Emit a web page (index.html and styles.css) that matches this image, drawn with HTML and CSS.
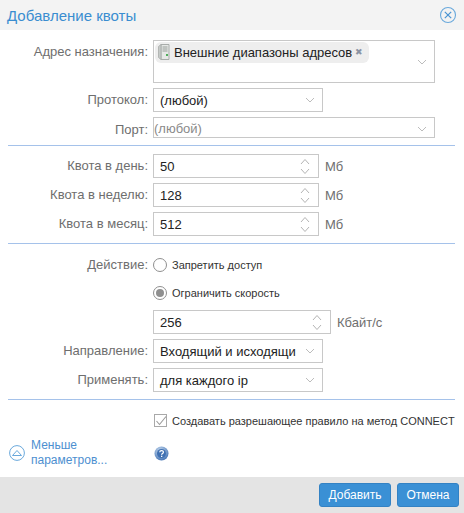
FILE: index.html
```html
<!DOCTYPE html>
<html lang="ru">
<head>
<meta charset="utf-8">
<title>Добавление квоты</title>
<link rel="stylesheet" href="styles.css">
</head>
<body>
<div class="dialog">
  <header class="head">
    <span class="title">Добавление квоты</span>
    <svg class="close" width="18" height="18" viewBox="0 0 18 18"><circle cx="9" cy="9" r="7.5" fill="none" stroke="#6aa9dc" stroke-width="1.1"/><path d="M5.8 5.8l6.4 6.4M12.2 5.8l-6.4 6.4" stroke="#4a94d2" stroke-width="1.2" fill="none"/></svg>
  </header>
  <main class="form">
    <div class="row first">
      <label class="lab">Адрес назначения:</label>
      <div class="field tags">
        <span class="tag">
          <svg width="12" height="16" viewBox="0 0 12 16"><path d="M3 .5h8v15H3z" fill="#e6e8e6" stroke="#a8acaa"/><path d="M.5 2.500L3 .5v15L.5 13.500z" fill="#c6cac8" stroke="#a8acaa" stroke-width=".8"/><path d="M4.500 3h5M4.500 5h5M4.500 7h5" stroke="#989e9a"/><rect x="8" y="10" width="2" height="2" fill="#4fae5c"/></svg>
          <span class="tagtext">Внешние диапазоны адресов</span>
          <span class="x">✖</span>
        </span>
        <svg class="chev" width="10" height="6" viewBox="0 0 10 6"><path d="M1 1l4 4 4-4"/></svg>
      </div>
    </div>
    <div class="row r5">
      <label class="lab">Протокол:</label>
      <div class="field sel"><span class="val">(любой)</span><svg class="chev" width="10" height="6" viewBox="0 0 10 6"><path d="M1 1l4 4 4-4"/></svg></div>
    </div>
    <div class="row r5">
      <label class="lab port">Порт:</label>
      <div class="field wide"><span class="ph">(любой)</span><svg class="chev" width="10" height="6" viewBox="0 0 10 6"><path d="M1 1l4 4 4-4"/></svg></div>
    </div>
    <hr class="rule r7">
    <div class="row r8">
      <label class="lab">Квота в день:</label>
      <div class="field num"><span class="val">50</span><svg class="spin" width="10" height="17" viewBox="0 0 10 17"><path d="M1 6l4-4.500 4 4.500M1 11l4 4.500 4-4.500"/></svg></div>
      <span class="unit">Мб</span>
    </div>
    <div class="row r5">
      <label class="lab">Квота в неделю:</label>
      <div class="field num"><span class="val">128</span><svg class="spin" width="10" height="17" viewBox="0 0 10 17"><path d="M1 6l4-4.500 4 4.500M1 11l4 4.500 4-4.500"/></svg></div>
      <span class="unit">Мб</span>
    </div>
    <div class="row r5">
      <label class="lab">Квота в месяц:</label>
      <div class="field num"><span class="val">512</span><svg class="spin" width="10" height="17" viewBox="0 0 10 17"><path d="M1 6l4-4.500 4 4.500M1 11l4 4.500 4-4.500"/></svg></div>
      <span class="unit">Мб</span>
    </div>
    <hr class="rule r7">
    <div class="row radio-row r13">
      <label class="lab">Действие:</label>
      <span class="radio"></span>
      <span class="small">Запретить доступ</span>
    </div>
    <div class="row radio-row r12">
      <span class="lab"></span>
      <span class="radio on"></span>
      <span class="small">Ограничить скорость</span>
    </div>
    <div class="row r9">
      <span class="lab"></span>
      <div class="field speed"><span class="val">256</span><svg class="spin" width="10" height="17" viewBox="0 0 10 17"><path d="M1 6l4-4.500 4 4.500M1 11l4 4.500 4-4.500"/></svg></div>
      <span class="unit">Кбайт/с</span>
    </div>
    <div class="row r5">
      <label class="lab">Направление:</label>
      <div class="field sel"><span class="val">Входящий и исходящи</span><svg class="chev" width="10" height="6" viewBox="0 0 10 6"><path d="M1 1l4 4 4-4"/></svg></div>
    </div>
    <div class="row r5">
      <label class="lab">Применять:</label>
      <div class="field sel"><span class="val">для каждого ip</span><svg class="chev" width="10" height="6" viewBox="0 0 10 6"><path d="M1 1l4 4 4-4"/></svg></div>
    </div>
    <hr class="rule r7">
    <div class="row check-row">
      <span class="lab"></span>
      <svg class="check" width="14" height="14" viewBox="0 0 14 14"><rect x=".5" y=".5" width="12" height="12" fill="#fff" stroke="#a9a9a9"/><path d="M2.500 7l3 3.500 6.500-8" fill="none" stroke="#9a9a9a" stroke-width="1.1"/></svg>
      <span class="checktext">Создавать разрешающее правило на метод CONNECT</span>
    </div>
    <div class="more">
      <div class="morelink">
        <svg width="16" height="16" viewBox="0 0 16 16"><circle cx="8" cy="8" r="7.400" fill="none" stroke="#6aa9dc"/><path d="M3.500 10.500L8 5.500l4.500 5z" fill="none" stroke="#6aa9dc"/></svg>
        <span class="moretext">Меньше параметров...</span>
      </div>
      <svg class="help" width="15" height="15" viewBox="0 0 15 15"><defs><radialGradient id="g" cx=".4" cy=".3" r=".8"><stop offset="0" stop-color="#c4d8ee"/><stop offset="1" stop-color="#3a6cb0"/></radialGradient></defs><circle cx="7.500" cy="7.500" r="7" fill="url(#g)"/><circle cx="7.500" cy="7.500" r="4.500" fill="#3f70b2"/><path d="M5.700 6.200c.2-2.200 3.800-2 3.700 0 0 1.300-1.800 1.200-1.800 2.500" fill="none" stroke="#fff" stroke-width="1.200"/><rect x="7" y="9.700" width="1.300" height="1.300" fill="#fff"/></svg>
    </div>
  </main>
  <footer class="foot">
    <button class="btn add">Добавить</button>
    <button class="btn cancel">Отмена</button>
  </footer>
</div>
</body>
</html>
```
FILE: styles.css
```css
* { box-sizing: border-box; }
html, body { margin: 0; padding: 0; background: #fff; }
body { font-family: "Liberation Sans", Arial, sans-serif; font-size: 13px; color: #222; }
.dialog { width: 464px; height: 513px; display: flex; flex-direction: column; overflow: hidden; }
.head { height: 30px; flex: none; background: #f3f3f3; display: flex; align-items: center; justify-content: space-between; padding: 0 7px 0 7px; }
.title { font-size: 15px; color: #3a8dd0; }
.close { display: block; }
.form { flex: 1; padding: 0 9px 0 8px; }
.row { display: flex; align-items: center; }
.first { align-items: flex-start; margin-top: 10px; }
.first .lab { padding-top: 4px; }
.r5 { margin-top: 5px; }
.r7 { margin-top: 7px; }
.r8 { margin-top: 8px; }
.r9 { margin-top: 9px; }
.r12 { margin-top: 12px; }
.r13 { margin-top: 13px; }
.lab { width: 140px; flex: none; text-align: right; color: #6e6e6e; line-height: 16px; }
.port { padding-top: 4px; }
.field { margin-left: 5px; height: 24px; border: 1px solid #c8c8c8; background: #fff; display: flex; align-items: center; justify-content: space-between; position: relative; }
.tags { width: 282px; height: 43px; align-items: flex-start; padding: 1px 0 0 1px; }
.tag { display: inline-flex; align-items: center; height: 21px; width: 214px; padding: 0 0 1px 3px; background: #eeeeee; border-radius: 6px; color: #222; }
.tagtext { margin-left: 4px; white-space: nowrap; }
.x { font-size: 9px; color: #8a93a3; margin-left: 3px; }
.tags .chev { position: absolute; right: 7px; top: 18px; }
.sel { width: 170px; padding: 0 7px 0 6px; }
.wide { width: 282px; height: 21px; padding: 2px 7px 0 0; }
.num { width: 166px; padding: 0 8px 0 6px; }
.speed { width: 178px; padding: 0 8px 0 6px; }
.val { color: #222; white-space: nowrap; }
.ph { color: #8a8a8a; }
.chev { flex: none; fill: none; stroke: #bcbcbc; stroke-width: 1; }
.spin { flex: none; fill: none; stroke: #b4b4b4; stroke-width: 1; }
.unit { margin-left: 6px; color: #6e6e6e; }
.rule { height: 1px; border: 0; margin-bottom: 0; margin-left: 0; margin-right: 0; background: #a5c2ea; }
.radio-row { height: 16px; }
.radio { width: 14px; height: 14px; margin-left: 5px; border: 1px solid #8f8f8f; border-radius: 50%; background: #fff; flex: none; position: relative; }
.radio.on::after { content: ""; position: absolute; left: 2px; top: 2px; width: 8px; height: 8px; border-radius: 50%; background: #8f8f8f; }
.small { margin-left: 5px; font-size: 11px; color: #333; }
.check-row { margin-top: 14px; height: 14px; }
.check { margin-left: 6px; flex: none; }
.checktext { margin-left: 4px; font-size: 11px; white-space: nowrap; color: #333; }
.more { display: flex; align-items: center; margin-top: 9px; height: 32px; }
.morelink { width: 146px; flex: none; display: flex; align-items: center; padding-left: 1px; }
.moretext { width: 90px; margin-left: 6px; color: #4d8fd0; line-height: 15px; font-size: 12px; }
.foot { height: 36px; flex: none; background: #e4e4e4; display: flex; align-items: center; justify-content: flex-end; gap: 6px; padding: 0 5px 0 0; }
.btn { height: 24px; border: 1px solid #3382c4; border-radius: 3px; background: #3a90d5; color: #fff; font-family: inherit; font-size: 12px; padding: 0; }
.add { width: 72px; }
.cancel { width: 62px; }
```
